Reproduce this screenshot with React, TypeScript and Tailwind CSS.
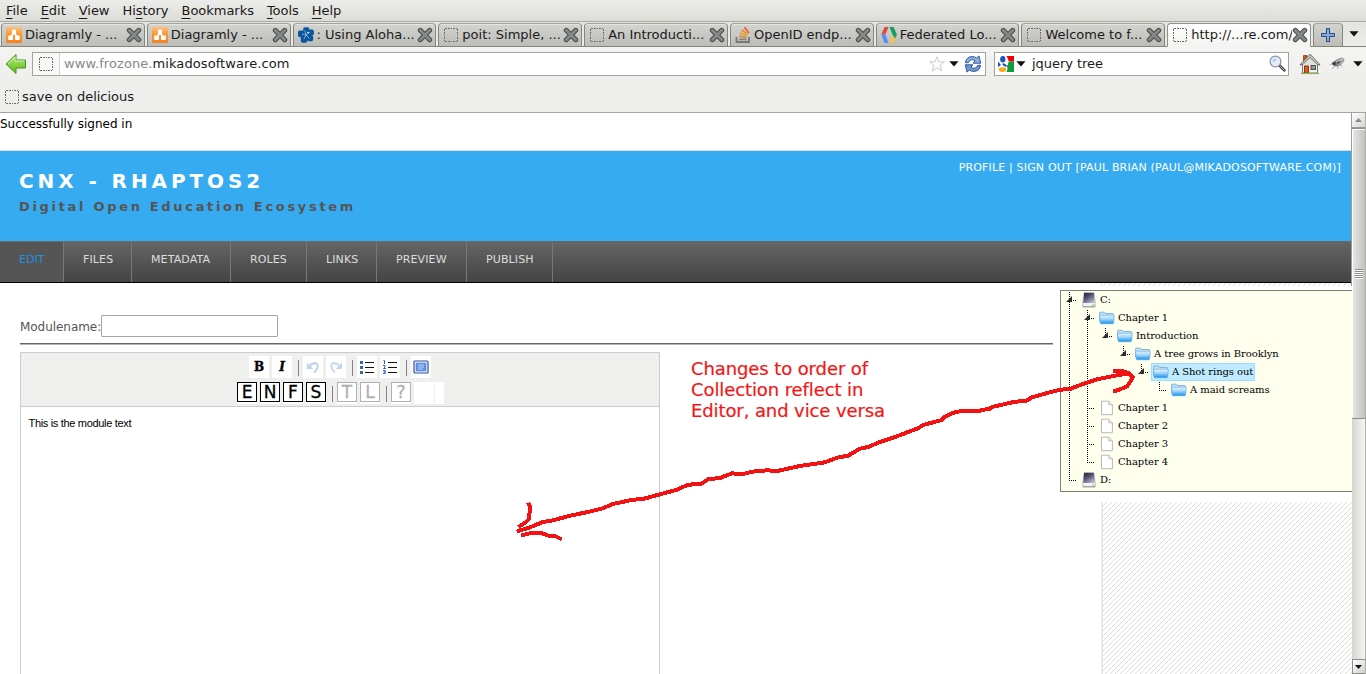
import React from "react";

const UI = "font-['DejaVu_Sans',sans-serif]";

/* ---------- icons ---------- */

function Placeholder() {
  return (
    <svg width="16" height="16" viewBox="0 0 16 16" className="shrink-0">
      <path
        d="M2 1.500h12M2 14.500h12M1.500 2v12M14.500 2v12"
        fill="none"
        stroke="#6a6a6a"
        strokeDasharray="2 1 2 1 1 1"
        shapeRendering="crispEdges"
      />
    </svg>
  );
}

function Diagramly() {
  return (
    <svg width="16" height="16" viewBox="0 0 16 16" className="shrink-0">
      <defs>
        <linearGradient id="dg" x1="0" y1="0" x2="0" y2="1">
          <stop offset="0" stopColor="#fcc07a" />
          <stop offset="0.500" stopColor="#f8962f" />
          <stop offset="1" stopColor="#f58220" />
        </linearGradient>
      </defs>
      <rect x="0" y="0" width="16" height="16" rx="1.500" fill="url(#dg)" />
      <path d="M8 5.500 4.500 10.500M8 5.500l3.500 5" stroke="#fff" strokeWidth="1.800" />
      <rect x="6" y="2.500" width="4" height="5" rx="0.800" fill="#fff" />
      <rect x="2.200" y="8.500" width="4.800" height="4.500" rx="0.800" fill="#fff" />
      <rect x="9" y="8.500" width="4.800" height="4.500" rx="0.800" fill="#fff" />
    </svg>
  );
}

function Flower() {
  return (
    <svg width="16" height="16" viewBox="0 0 16 16" className="shrink-0">
      <g fill="#0b559f">
        <rect x="5.200" y="0.200" width="6" height="6.500" rx="1.600" />
        <rect x="9.600" y="2.600" width="6.300" height="6" rx="1.800" />
        <rect x="9" y="8.200" width="6.200" height="6" rx="1.800" />
        <rect x="2.800" y="9.400" width="6.400" height="6.400" rx="1.800" />
        <rect x="0" y="3.600" width="6.500" height="6.600" rx="1.800" />
        <circle cx="8" cy="8" r="4.800" />
      </g>
      <path d="M8 8 6.800 3.500M8 8l4-3M8 8l3.500 3.500M8 8l-2 4M8 8 4 7" stroke="#c8dcf0" strokeWidth="0.600" />
      <circle cx="10" cy="5.600" r="0.800" fill="#fff" />
    </svg>
  );
}

function StackIcon() {
  return (
    <svg width="16" height="16" viewBox="0 0 16 16" className="shrink-0">
      <path d="M1.500 10v5h12.500v-5" fill="none" stroke="#777" strokeWidth="1.800" />
      <path d="M4 12.400h7.500" stroke="#8a8072" strokeWidth="1.600" />
      <path d="M4.200 9.300l7.400 1.200" stroke="#c88c3c" strokeWidth="1.600" />
      <path d="M4.800 6l7 2.700" stroke="#ef9b1c" strokeWidth="1.600" />
      <path d="M6.600 2.800l5.800 4.400" stroke="#f28a12" strokeWidth="1.600" />
      <path d="M9.500 .3l4.300 5.600" stroke="#f2561a" strokeWidth="1.700" />
    </svg>
  );
}

function CodeIcon() {
  return (
    <svg width="16" height="16" viewBox="0 0 16 16" className="shrink-0">
      <path d="M3.600 0h4L4.400 7.600H.3z" fill="#dd4b39" />
      <path d="M.3 7.600h4.100L7.600 16h-4z" fill="#4d8ef7" />
      <path d="M8.500 0h4l3.400 7.600-1.800 3.800-2.600-3.800z" fill="#12a05c" />
      <path d="M11.200 8.500l2.900 2.900L12.200 16H8.200z" fill="#f9c23c" />
    </svg>
  );
}

function CloseX() {
  return (
    <svg width="16" height="16" viewBox="0 0 16 16" className="shrink-0">
      <path d="M3.300 3.300l9.400 9.400M12.700 3.300l-9.400 9.400" stroke="#4b4f4e" strokeWidth="5" strokeLinecap="round" />
      <path d="M3.300 3.300l9.400 9.400M12.700 3.300l-9.400 9.400" stroke="#858a88" strokeWidth="2.800" strokeLinecap="round" />
    </svg>
  );
}

function Caret() {
  return (
    <svg width="10" height="6" viewBox="0 0 10 6" className="shrink-0">
      <path d="M0.300 0.300h9.200L5 5.600z" fill="#111" />
    </svg>
  );
}

function BackArrow() {
  return (
    <svg width="22" height="22" viewBox="0 0 22 22" className="shrink-0">
      <defs>
        <linearGradient id="ba" x1="0" y1="0" x2="0" y2="1">
          <stop offset="0" stopColor="#b4ec74" />
          <stop offset="1" stopColor="#5fb81c" />
        </linearGradient>
      </defs>
      <path d="M1 11 11 1.500V7h9.500v8H11v5.500z" fill="url(#ba)" stroke="#44902a" strokeLinejoin="round" />
      <path d="M3 10.800 10 4v4h9.500" fill="none" stroke="#d6f7b0" strokeWidth="0.900" />
    </svg>
  );
}

function Star() {
  return (
    <svg width="16" height="16" viewBox="0 0 16 16" className="shrink-0">
      <path
        d="M8 .8l2.100 5h5.200L11.200 9.300l1.500 5.700L8 11.900 3.300 15l1.500-5.700L.7 5.800h5.200z"
        fill="#fcfcfc"
        stroke="#c4c4c4"
        strokeWidth="0.900"
      />
    </svg>
  );
}

function Reload() {
  return (
    <svg width="18" height="18" viewBox="0 0 18 18" className="shrink-0">
      <path
        d="M1.500 7.700C1.500 3 7.500-.5 12.600 3L15 .9l1.700 7.300H9.200L11 5.600C8 3.600 5 5.400 4.400 7.700z"
        fill="#8fb0de"
        stroke="#204a87"
        strokeWidth="0.900"
      />
      <path
        d="M16.500 10.300c0 4.700-6 8.200-11.100 4.700L3 17.100 1.300 9.800h7.500L7 12.400c3 2 6 .2 6.600-2.100z"
        fill="#6f97d0"
        stroke="#204a87"
        strokeWidth="0.900"
      />
    </svg>
  );
}

function Google() {
  return (
    <svg width="16" height="16" viewBox="0 0 16 16" className="shrink-0">
      <path d="M8.500 0H16v5.500H11z" fill="#f00000" />
      <path d="M10.500 5.500H16V16H9z" fill="#129a3c" />
      <path d="M8 16c2.500-1.500 2.500-4 .5-6l2.500-2.500 2 3V16z" fill="#129a3c" />
      <ellipse cx="4.800" cy="3.200" rx="2.600" ry="3.200" fill="#1c50c4" />
      <path d="M0 5.500l3 3.500L0 11z" fill="#1c50c4" />
      <ellipse cx="6.500" cy="9" rx="2.400" ry="1.200" transform="rotate(35 6.500 9)" fill="#1c50c4" />
      <ellipse cx="4.500" cy="13.600" rx="3.700" ry="2.300" fill="#f5ad18" />
    </svg>
  );
}

function Magnifier() {
  return (
    <svg width="17" height="17" viewBox="0 0 17 17" className="shrink-0">
      <path d="M10.500 10.500l4.800 4.700" stroke="#4c4c4c" strokeWidth="2.800" strokeLinecap="round" />
      <path d="M11.500 11.500l3.500 3.500" stroke="#aaa" strokeWidth="1" strokeLinecap="round" />
      <circle cx="6.500" cy="6.500" r="5.400" fill="#e3eefa" stroke="#8d9196" strokeWidth="1.200" />
      <path d="M3.500 7a3.300 3.300 0 0 1 4-3.500c0 2-2 4-4 3.500z" fill="#a9cbee" />
    </svg>
  );
}

function Home() {
  return (
    <svg width="22" height="22" viewBox="0 0 22 22" className="shrink-0">
      <path d="M4.500 2.500H8v6H4.500z" fill="#d8501c" stroke="#933510" strokeWidth="0.800" />
      <path d="M3.500 10.500 11 3l7.500 7.500V20h-15z" fill="#f1f1ef" stroke="#777" />
      <path d="M1 11.800 11 1.200l10 10.600h-2.500L11 4.500 3.500 11.800z" fill="#c9cdc6" stroke="#555753" strokeWidth="0.900" />
      <path d="M7 9v3M9 7v5M11 5.500v6.500M13 7v5M15 9v3" stroke="#c6cbc3" strokeWidth="0.800" />
      <rect x="5.500" y="13" width="4" height="7" fill="#e0581e" stroke="#8f3510" />
      <rect x="12" y="12.500" width="4.500" height="4" fill="#8b9c98" stroke="#4c504c" />
      <path d="M2 20.500h18" stroke="#86b84c" strokeWidth="1.200" />
    </svg>
  );
}

function Bug() {
  return (
    <svg width="17" height="14" viewBox="0 0 17 14" className="shrink-0">
      <path d="M1 8l3-2M3 12l4-4M9 12V9M13.500 9.500l-3-2" stroke="#a2a2a2" strokeWidth="0.900" />
      <ellipse cx="11" cy="4" rx="4.600" ry="3" transform="rotate(-22 11 4)" fill="#a8a8a8" />
      <ellipse cx="8.500" cy="6" rx="4.400" ry="3.200" transform="rotate(-15 8.500 6)" fill="#7c7c7c" />
      <circle cx="5" cy="6.600" r="1.900" fill="#444" />
      <path d="M7 4.800l6-2.300M9 7.500l4-2.300" stroke="#d6d6d6" strokeWidth="0.900" />
      <circle cx="9.500" cy="5.700" r="0.900" fill="#333" />
    </svg>
  );
}

function Drive() {
  return (
    <svg width="16" height="16" viewBox="0 0 16 16" className="shrink-0">
      <defs>
        <linearGradient id="dr" x1="0" y1="0" x2="0.700" y2="1">
          <stop offset="0" stopColor="#22223a" />
          <stop offset="0.450" stopColor="#4f4f6c" />
          <stop offset="1" stopColor="#b4b4cc" />
        </linearGradient>
      </defs>
      <path d="M3 1h10l1.300 10.500v3.300H1.700v-3.300z" fill="#f2f2f2" stroke="#b0b0b0" strokeWidth="0.800" />
      <path d="M3.200 .8h9.600l1 10.200H2.200z" fill="url(#dr)" />
      <path d="M2 14.800h12" stroke="#888" strokeWidth="0.800" />
      <path d="M11.300 13H13" stroke="#58c058" strokeWidth="1.100" />
    </svg>
  );
}

function Folder() {
  return (
    <svg width="16" height="16" viewBox="0 0 16 16" className="shrink-0">
      <defs>
        <linearGradient id="fo" x1="0" y1="0" x2="0" y2="1">
          <stop offset="0" stopColor="#e6f4fe" />
          <stop offset="0.450" stopColor="#a2d5fa" />
          <stop offset="1" stopColor="#0f8cec" />
        </linearGradient>
      </defs>
      <path d="M.6 11V3q0-.8.800-.8h4.200l1 1.300h7.200q.8 0 .8.800v7z" fill="#c2e2f8" stroke="#6ea6d0" strokeWidth="0.800" />
      <path
        d="M.5 5.800q0-.6.600-.6h13.700q.6 0 .5.600l-.8 7.200q-.1.800-.9.800H2q-.7 0-.8-.800z"
        fill="url(#fo)"
        stroke="#5ca8e2"
        strokeWidth="0.600"
      />
    </svg>
  );
}

function Doc() {
  return (
    <svg width="16" height="16" viewBox="0 0 16 16" className="shrink-0">
      <path d="M2.500 1.200h7.300l3.600 3.600v9.900H2.500z" fill="#fff" stroke="#b0b0b0" strokeWidth="0.900" strokeLinejoin="round" />
      <path d="M9.800 1.200v3.600h3.600" fill="#eee" stroke="#b0b0b0" strokeWidth="0.800" />
    </svg>
  );
}

/* ---------- browser chrome ---------- */

const menus: [string, string, string][] = [
  ["", "F", "ile"],
  ["", "E", "dit"],
  ["", "V", "iew"],
  ["Hi", "s", "tory"],
  ["", "B", "ookmarks"],
  ["", "T", "ools"],
  ["", "H", "elp"],
];

function MenuBar() {
  return (
    <div className="flex h-[22px] shrink-0 items-center gap-[13px] border-b border-[#a9a9a2] bg-linear-to-b from-[#ececea] to-[#dcdcd7] pl-[6px] text-[13px] tracking-[-0.03px]">
      {menus.map(([a, b, c]) => (
        <span key={a + b + c} className="leading-[20px]">
          {a}
          <span className="underline underline-offset-[3px]">{b}</span>
          {c}
        </span>
      ))}
    </div>
  );
}

const tabs = [
  { label: "Diagramly - ...", icon: <Diagramly /> },
  { label: "Diagramly - ...", icon: <Diagramly /> },
  { label: ": Using Aloha...", icon: <Flower /> },
  { label: "poit: Simple, ...", icon: <Placeholder /> },
  { label: "An Introducti...", icon: <Placeholder /> },
  { label: "OpenID endp...", icon: <StackIcon /> },
  { label: "Federated Lo...", icon: <CodeIcon /> },
  { label: "Welcome to f...", icon: <Placeholder /> },
  { label: "http://...re.com/", icon: <Placeholder />, active: true },
];

function TabStrip() {
  return (
    <div className="flex h-[25px] shrink-0 bg-linear-to-b from-[#e4e4e1] to-[#ecece9] pt-px shadow-[inset_0_-1px_0_#83837d]">
      <div className="flex w-[1311px] shrink-0 gap-[2px] pl-px">
        {tabs.map((t, i) => (
          <div
            key={i}
            className={
              "flex min-w-0 flex-1 items-center rounded-t-[4px] border pl-[4px] pr-[2px] text-[13px] " +
              (t.active
                ? "border-[#92928c] border-b-[#f4f4f2] bg-linear-to-b from-[#ffffff] to-[#f3f3f1]"
                : "border-[#85857f] border-t-[#a2a29c] bg-linear-to-b from-[#d3d3d0] to-[#bcbcb8] shadow-[inset_0_1px_0_#e4e4e1]")
            }
          >
            {t.icon}
            <span className="ml-[3px] min-w-0 flex-1 overflow-hidden whitespace-nowrap leading-[20px] text-[#1a1a1a]">
              {t.label}
            </span>
            <CloseX />
          </div>
        ))}
      </div>
      <div className="ml-[2px] flex w-[30px] items-center justify-center rounded-t-[4px] border border-[#85857f] border-t-[#a2a29c] bg-linear-to-b from-[#d3d3d0] to-[#bcbcb8]">
        <svg width="14" height="14" viewBox="0 0 14 14">
          <path d="M5.500.5h3v5h5v3h-5v5h-3v-5h-5v-3h5z" fill="#86abd9" stroke="#204a87" />
        </svg>
      </div>
      <div className="flex flex-1 items-center justify-center pb-[3px] pr-[2px]">
        <Caret />
      </div>
    </div>
  );
}

function NavBar() {
  return (
    <div className="flex h-[33px] shrink-0 items-center bg-linear-to-b from-[#f4f4f2] to-[#eeeeec] pl-[5px] text-[13px]">
      <BackArrow />
      <div className="ml-[5px] flex h-[24px] w-[954px] items-center border border-[#a4a49c] bg-white">
        <div className="flex h-full w-[27px] items-center justify-center border-r border-[#d5d5d0] bg-[#f8f8f6]">
          <Placeholder />
        </div>
        <span className="ml-[4px] tracking-[0.08px] text-[#888]">
          www.frozone.<span className="text-[#1a1a1a]">mikadosoftware.com</span>
        </span>
        <div className="ml-auto flex items-center pr-[3px]">
          <Star />
          <span className="ml-[4px] mr-[5px] flex">
            <Caret />
          </span>
          <Reload />
        </div>
      </div>
      <div className="ml-[8px] flex h-[24px] w-[295px] items-center border border-[#a4a49c] bg-white pl-[3px] pr-[2px]">
        <Google />
        <span className="ml-[2px] flex">
          <Caret />
        </span>
        <span className="ml-[6px] tracking-[-0.05px] text-[#1a1a1a]">jquery tree</span>
        <span className="ml-auto">
          <Magnifier />
        </span>
      </div>
      <span className="ml-[10px]">
        <Home />
      </span>
      <span className="ml-[8px]">
        <Bug />
      </span>
      <span className="ml-[5px] mr-[3px] flex flex-1 justify-end">
        <Caret />
      </span>
    </div>
  );
}

/* ---------- tree ---------- */

type Guide = "line" | "mid" | "end" | "openMid" | "openEnd" | "none";

function GuideCell({ kind }: { kind: Guide }) {
  const full = kind === "line" || kind === "mid" || kind === "openMid";
  const half = kind === "end" || kind === "openEnd";
  const open = kind === "openMid" || kind === "openEnd";
  return (
    <svg width="18" height="18" viewBox="0 0 18 18" className="shrink-0" shapeRendering="crispEdges">
      {full && <path d="M8.500 1v17" stroke="#000" strokeDasharray="1 1" />}
      {half && <path d="M8.500 1v9" stroke="#000" strokeDasharray="1 1" />}
      {kind !== "line" && kind !== "none" && <path d="M10 9.500h5" stroke="#000" strokeDasharray="1 1" />}
      {open && <path d="M5 11h6V5z" fill="#2e2e2e" shapeRendering="auto" />}
    </svg>
  );
}

const rows: { guides: Guide[]; icon: React.ReactNode; label: string; selected?: boolean }[] = [
  { guides: ["openMid"], icon: <Drive />, label: "C:" },
  { guides: ["line", "openMid"], icon: <Folder />, label: "Chapter 1" },
  { guides: ["line", "line", "openEnd"], icon: <Folder />, label: "Introduction" },
  { guides: ["line", "line", "none", "openEnd"], icon: <Folder />, label: "A tree grows in Brooklyn" },
  { guides: ["line", "line", "none", "none", "openEnd"], icon: <Folder />, label: "A Shot rings out", selected: true },
  { guides: ["line", "line", "none", "none", "none", "end"], icon: <Folder />, label: "A maid screams" },
  { guides: ["line", "mid"], icon: <Doc />, label: "Chapter 1" },
  { guides: ["line", "mid"], icon: <Doc />, label: "Chapter 2" },
  { guides: ["line", "mid"], icon: <Doc />, label: "Chapter 3" },
  { guides: ["line", "end"], icon: <Doc />, label: "Chapter 4" },
  { guides: ["end"], icon: <Drive />, label: "D:" },
];

function Tree() {
  return (
    <div className="mt-[4px] h-[202px] shrink-0 border border-r-0 border-[#808075] bg-[#ffffee] font-['DejaVu_Serif',serif] text-[10px] tracking-[-0.08px] text-black">
      {rows.map((r, i) => (
        <div key={i} className="flex h-[18px] items-center">
          {r.guides.map((g, j) => (
            <GuideCell key={j} kind={g} />
          ))}
          <span
            className={
              "flex h-[18px] items-center border pl-px pr-px " +
              (r.selected ? "border-[#99defd] bg-[#beebff]" : "border-transparent")
            }
          >
            {r.icon}
            <span className="ml-[3px] whitespace-nowrap leading-[16px]">{r.label}</span>
          </span>
        </div>
      ))}
    </div>
  );
}

function Hatch({ id }: { id: string }) {
  return (
    <svg width="250" height="100%" className="block">
      <defs>
        <pattern id={id} width="5" height="5" patternUnits="userSpaceOnUse">
          <path
            d="M4 0h1v1h-1zM3 1h1v1h-1zM2 2h1v1h-1zM1 3h1v1h-1zM0 4h1v1h-1z"
            fill="#dcdcdc"
            shapeRendering="crispEdges"
          />
        </pattern>
      </defs>
      <rect width="100%" height="100%" fill={`url(#${id})`} />
      <rect width="1" height="100%" fill="#e2e2e2" />
    </svg>
  );
}

/* ---------- editor ---------- */

function IconButton({ children }: { children?: React.ReactNode }) {
  return <span className="mr-[3px] flex h-[22px] w-[20px] items-center justify-center bg-white">{children}</span>;
}

function LetterButton({ letter, muted }: { letter: string; muted?: boolean }) {
  return (
    <span className="mr-[3px] flex h-[22px] w-[20px] items-start bg-white">
      <span
        className={
          "flex h-[20px] w-[20px] items-center justify-center border pt-px text-[17px] leading-none " +
          (muted
            ? "border-[#b0b0b0] text-[#b0b0b0] [-webkit-text-stroke:0.3px_#b0b0b0]"
            : "border-black text-black [-webkit-text-stroke:0.3px_#000]")
        }
      >
        {letter}
      </span>
    </span>
  );
}

function Sep() {
  return (
    <span className="flex h-[22px] w-[8px] items-start pl-[3px] pt-[4px]">
      <span className="h-[16px] w-px bg-[#85808a]" />
    </span>
  );
}

function Lines() {
  return <path d="M6 3.500h9M6 8.500h9M6 13.500h9" stroke="#111" shapeRendering="crispEdges" />;
}

function EditorToolbar() {
  return (
    <div className="flex h-[54px] shrink-0 flex-col border-b border-[#ccc] bg-[#efefee] pt-[3px]">
      <div className="flex pl-[228px]">
        <IconButton>
          <span className="font-['DejaVu_Serif',serif] text-[12px] font-bold leading-none text-black [-webkit-text-stroke:0.4px_#000]">
            B
          </span>
        </IconButton>
        <IconButton>
          <span className="font-['DejaVu_Serif',serif] text-[12px] font-bold italic leading-none text-black [-webkit-text-stroke:0.4px_#000]">
            I
          </span>
        </IconButton>
        <Sep />
        <IconButton>
          <svg width="14" height="14" viewBox="0 0 14 14">
            <path
              d="M3.500 6.500C6 2 12 2 11.800 6.500 11.600 9.500 9.500 10.500 8 12.500"
              fill="none"
              stroke="#c3d3ee"
              strokeWidth="2.200"
            />
            <path d="M1 2.500v6.500h6.500z" fill="#c3d3ee" />
          </svg>
        </IconButton>
        <IconButton>
          <svg width="14" height="14" viewBox="0 0 14 14">
            <path
              d="M10.500 6.500C8 2 2 2 2.200 6.500 2.400 9.500 4.500 10.500 6 12.500"
              fill="none"
              stroke="#cfdcf2"
              strokeWidth="2.200"
            />
            <path d="M13 2.500v6.500H6.500z" fill="#c3d3ee" />
          </svg>
        </IconButton>
        <Sep />
        <IconButton>
          <svg width="16" height="16" viewBox="0 0 16 16">
            <Lines />
            <path d="M1 2h3v3H1zM1 7h3v3H1zM1 12h3v3H1z" fill="#3467a8" />
          </svg>
        </IconButton>
        <IconButton>
          <svg width="16" height="16" viewBox="0 0 16 16">
            <Lines />
            <path
              d="M1.500 1.500h1V5M1 6.500h2V8L1.500 9.500H4M1 11.500h2.200v3H1M1.500 13h1.500"
              fill="none"
              stroke="#2f5fc0"
            />
          </svg>
        </IconButton>
        <Sep />
        <IconButton>
          <svg width="16" height="14" viewBox="0 0 16 14">
            <rect x="1" y="1" width="14" height="12" rx="1" fill="#fff" stroke="#2c4f9a" strokeWidth="1.200" />
            <rect x="2.600" y="2.600" width="10.800" height="8.800" fill="#5a8fe4" />
            <path d="M5 5h6M5 7h6M5 9h5" stroke="#cfe0fa" strokeWidth="0.900" />
          </svg>
        </IconButton>
      </div>
      <div className="mt-[4px] flex pl-[216px]">
        <LetterButton letter="E" />
        <LetterButton letter="N" />
        <LetterButton letter="F" />
        <LetterButton letter="S" />
        <Sep />
        <LetterButton letter="T" muted />
        <LetterButton letter="L" muted />
        <Sep />
        <LetterButton letter="?" muted />
        <span className="h-[22px] w-[20px] bg-white" />
        <span className="ml-px h-[22px] w-[9px] bg-white" />
      </div>
    </div>
  );
}

/* ---------- page ---------- */

const nav = [
  { label: "EDIT", w: "w-[64px]", active: true },
  { label: "FILES", w: "w-[68px]" },
  { label: "METADATA", w: "w-[99px]" },
  { label: "ROLES", w: "w-[76px]" },
  { label: "LINKS", w: "w-[70px]" },
  { label: "PREVIEW", w: "w-[90px]" },
  { label: "PUBLISH", w: "w-[86px]" },
];

function Page() {
  return (
    <div className="flex w-[1352px] shrink-0 flex-col bg-white">
      <div className="flex shrink-0 flex-col border-r border-[#9c9c98]">
        <div className="h-[37px] pt-[3px] text-[12px] leading-[16px] text-black">Successfully signed in</div>
        <header className="flex h-[91px] justify-between border-t border-[#dcdcdc] bg-[#36abf2] pl-[19px] pr-[10px]">
          <div className="pt-[18px]">
            <h1 className="text-[20px] font-bold leading-[24px] tracking-[3.92px] text-white">CNX - RHAPTOS2</h1>
            <h2 className="mt-[5px] text-[13px] font-bold leading-[18px] tracking-[2.68px] text-[#555]">
              Digital Open Education Ecosystem
            </h2>
          </div>
          <p className="pt-[9px] text-[11px] leading-[16px] tracking-[0.165px] text-white">
            PROFILE | SIGN OUT [PAUL BRIAN (PAUL@MIKADOSOFTWARE.COM)]
          </p>
        </header>
        <nav className="flex h-[42px] border-b border-black bg-linear-to-b from-[#666] to-[#444] text-[11px]">
          {nav.map((n) => (
            <span
              key={n.label}
              className={
                "shrink-0 border-r border-t border-[#777] border-t-[#6a6a6a] pl-[19px] pt-[10px] leading-[16px] " +
                n.w +
                (n.active ? " bg-[#555] text-[#1e90e0]" : " tracking-[0.12px] text-[#ddd]")
              }
            >
              {n.label}
            </span>
          ))}
        </nav>
      </div>
      <div className="flex min-h-0 flex-1">
        <main className="flex w-[1060px] shrink-0 flex-col pl-[20px] pr-[7px]">
          <div className="mt-[32px] flex h-[22px] shrink-0 items-center">
            <label className="w-[81px] pt-[2px] text-[12px] tracking-[-0.05px] text-[#555]">Modulename:</label>
            <input className="h-[22px] w-[177px] rounded-[1px] border border-[#a8a89f] bg-white" />
          </div>
          <div className="mt-[6px] h-[2px] shrink-0 border-b border-[#b5b5b5] bg-[#666]" />
          <div className="mt-[7px] flex min-h-0 flex-1">
            <section className="flex w-[640px] shrink-0 flex-col border border-b-0 border-[#ccc]">
              <EditorToolbar />
              <p className="pl-[7.500px] pt-[9px] font-['Liberation_Sans',sans-serif] text-[11px] leading-[14px] tracking-[-0.32px] text-black">
                This is the module text
              </p>
            </section>
            <p className="ml-[31px] mt-[6px] w-[220px] text-[18px] leading-[21px] tracking-[-0.1px] text-[#f21616] [-webkit-text-stroke:0.2px_#f21616]">
              Changes to order of
              <br />
              Collection reflect in
              <br />
              Editor, and vice versa
            </p>
          </div>
        </main>
        <aside className="flex min-w-0 flex-1 flex-col">
          <div className="ml-[41px] h-[3px] shrink-0 overflow-hidden border-r border-[#9c9c98]">
            <Hatch id="hatchTop" />
          </div>
          <Tree />
          <div className="ml-[41px] mt-[10px] min-h-0 flex-1 overflow-hidden border-l border-[#f0f0f0]">
            <Hatch id="hatchBottom" />
          </div>
        </aside>
      </div>
    </div>
  );
}

function ScrollBar() {
  return (
    <div className="flex w-[14px] shrink-0 flex-col border-r border-[#b0b0ac] bg-linear-to-r from-[#d4d6d0] to-[#f6f6f4]">
      <div className="flex h-[15px] shrink-0 items-center justify-center border-b border-[#9a9a94] bg-linear-to-br from-white to-[#d6d6d4]">
        <svg width="8" height="4" viewBox="0 0 8 4">
          <path d="M0 4h7L3.500 0z" fill="#888" />
        </svg>
      </div>
      <div className="flex h-[291px] shrink-0 items-center justify-center border-b border-t border-[#8f8f8a] bg-linear-to-r from-[#e8e8e6] to-[#c4c2c0] shadow-[inset_1px_1px_0_#fff]">
        <svg width="8" height="10" viewBox="0 0 8 10" shapeRendering="crispEdges">
          <path d="M0 .5h8M0 2.500h8M0 4.500h8M0 6.500h8M0 8.500h8" stroke="#8c8c88" />
          <path d="M0 1.500h8M0 3.500h8M0 5.500h8M0 7.500h8M0 9.500h8" stroke="#fff" />
        </svg>
      </div>
      <div className="flex-1" />
      <div className="flex h-[15px] shrink-0 items-center justify-center border border-r-0 border-[#8f8f8a] bg-linear-to-br from-white to-[#cfcfcd]">
        <svg width="8" height="4" viewBox="0 0 8 4">
          <path d="M0 0h7L3.500 4z" fill="#111" />
        </svg>
      </div>
    </div>
  );
}

function Annotation() {
  return (
    <svg
      width="1366"
      height="674"
      viewBox="0 0 1366 674"
      className="pointer-events-none absolute left-0 top-0"
      shapeRendering="crispEdges"
    >
      <g fill="none" stroke="#f21212" strokeWidth="4" strokeLinejoin="round" strokeLinecap="square">
        <path d="M518.500 531 530 527.300 543 522 553 520.300 570 515.700 588 512 602.700 508.300 613 504 633 499.700 643 499 660 494.300 677 489.700 688 484.700 701 484 708 479.300 720 478 732 473.300 742 474.300 752 471.700 767 470.300 777 471 800 466 825 462.300 837 457.700 848 455.700 860 448.700 868 447 880 442 895 437 918 428.300 923 425 942 420 944 417.300 952 413 963 410.700 977 410.700 979 411.300 982 409.700 989 409.300 992 407 1015 401.700 1026 401 1032 397.300 1052 391.700 1060 389.700 1070 389 1083 384 1097 379.300 1117 375.300 1128 373.500" />
        <path d="M529 504.500 530 507 529 519 526 522 520 526" />
        <path d="M523 535 529 533.500 541 533 548 535.500 555 536 560 538.500" />
        <path d="M1115 371 1122 371 1128 373 1133 376.700 1130 382 1127 386.500 1120 389.300 1115 391" />
      </g>
    </svg>
  );
}

export default function App() {
  return (
    <div className={"relative flex h-[674px] w-[1366px] flex-col overflow-hidden bg-[#eeeeec] text-[#1a1a1a] " + UI}>
      <MenuBar />
      <TabStrip />
      <NavBar />
      <div className="flex h-[33px] shrink-0 items-center border-b border-[#a5a59d] bg-[#eeeeec] pl-[4px] pt-[2px] text-[13px]">
        <Placeholder />
        <span className="ml-[2px]">save on delicious</span>
      </div>
      <div className="flex min-h-0 flex-1">
        <Page />
        <ScrollBar />
      </div>
      <Annotation />
    </div>
  );
}
